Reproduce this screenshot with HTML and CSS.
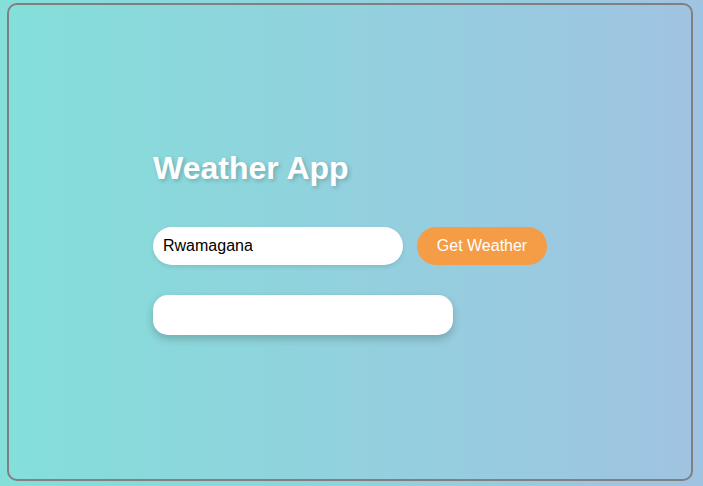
FILE: index.html
```html
<!DOCTYPE html>
<html lang="en">
<head>
<meta charset="utf-8">
<title>Weather App</title>
<link rel="stylesheet" href="styles.css">
</head>
<body>
<div class="frame">
  <div class="app">
    <h1 class="title">Weather App</h1>
    <div class="search">
      <input class="city" type="text" value="Rwamagana">
      <button class="go">Get Weather</button>
    </div>
    <div class="result"></div>
  </div>
</div>
</body>
</html>
```
FILE: styles.css
```css
html, body {
  margin: 0;
  height: 100%;
}
body {
  background: linear-gradient(to right, #84dfd9, #a0c3e2);
  font-family: "Liberation Sans", Arial, sans-serif;
  padding: 3px 10px 5px 7px;
  box-sizing: border-box;
}
.frame {
  height: 100%;
  box-sizing: border-box;
  border: 2px solid #808080;
  border-radius: 10px;
  display: flex;
  align-items: center;
  justify-content: center;
}
.app {
  display: flex;
  flex-direction: column;
  align-items: flex-start;
  width: 394px;
}
.title {
  margin: 0 0 40px 0;
  font-size: 32px;
  line-height: 37px;
  font-weight: bold;
  color: #fff;
  text-shadow: 2px 2px 4px rgba(0, 0, 0, 0.2);
}
.search {
  display: flex;
  gap: 14px;
  margin-bottom: 30px;
}
.city {
  width: 250px;
  height: 38px;
  box-sizing: border-box;
  border: none;
  border-radius: 19px;
  padding: 0 10px;
  font-family: "Liberation Sans", Arial, sans-serif;
  font-size: 16px;
  color: #000;
  background: #fff;
  box-shadow: 0 2px 4px rgba(0, 0, 0, 0.1);
  outline: none;
}
.go {
  width: 130px;
  height: 38px;
  border: none;
  border-radius: 19px;
  background: #f59c46;
  color: #fff;
  font-family: "Liberation Sans", Arial, sans-serif;
  font-size: 16px;
  padding: 0;
}
.result {
  width: 300px;
  height: 40px;
  background: #fff;
  border-radius: 15px;
  box-shadow: 0 4px 8px rgba(0, 0, 0, 0.2);
}
```
